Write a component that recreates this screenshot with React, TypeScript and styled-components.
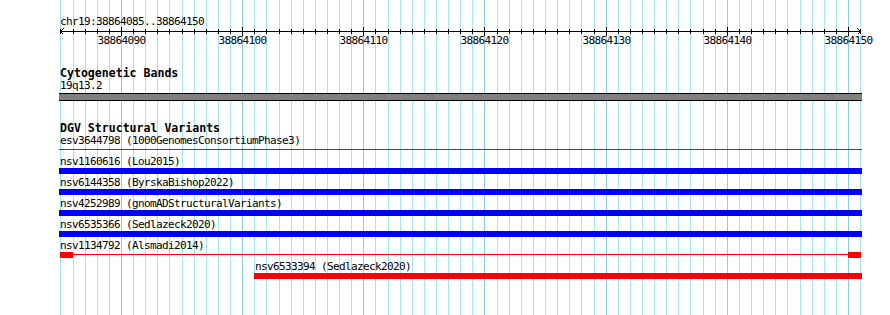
import React from "react";
import styled, { createGlobalStyle } from "styled-components";

// genomic window shown in the panel
const START = 38864085;
const END = 38864150;
const ORIGIN = 60.4;
const BP_WIDTH = 12.117;
const PANEL_LEFT = 59;
const PANEL_WIDTH = 803;

const bpX = (bp: number) => Math.round(ORIGIN + (bp - START) * BP_WIDTH);
const local = (x: number) => x - PANEL_LEFT;

const GlobalStyle = createGlobalStyle`
  html, body {
    margin: 0;
    padding: 0;
    background: #ffffff;
  }
  body {
    color: #000000;
    font-family: "DejaVu Sans Mono", "Liberation Mono", monospace;
  }
`;

const Canvas = styled.div`
  background: #ffffff;
  height: 315px;
  overflow: hidden;
  position: relative;
  width: 890px;
`;

const GridSvg = styled.svg`
  left: 0;
  position: absolute;
  top: 0;
`;

const Panel = styled.div`
  display: flex;
  flex-direction: column;
  margin-left: ${PANEL_LEFT}px;
  padding-top: 15px;
  position: relative;
  width: ${PANEL_WIDTH}px;
`;

const SmallText = styled.div`
  font-size: 11px;
  height: 13px;
  letter-spacing: -0.62px;
  line-height: 13px;
  padding-left: 1px;
  white-space: nowrap;
`;

const TrackTitle = styled.div`
  font-size: 11.6px;
  font-weight: bold;
  height: 10px;
  letter-spacing: -0.02px;
  line-height: 10px;
  margin-bottom: 1px;
  padding-left: 1px;
  white-space: nowrap;
`;

const RulerSvg = styled.svg`
  display: block;
  overflow: visible;
`;

const TickLabels = styled.div`
  height: 13px;
  position: relative;
`;

const TickLabel = styled.span`
  font-size: 11px;
  letter-spacing: -0.62px;
  line-height: 13px;
  position: absolute;
  top: 0;
  transform: translateX(-50%);
  white-space: nowrap;
`;

const Section = styled.section<{ $gap: number }>`
  display: flex;
  flex-direction: column;
  margin-top: ${({ $gap }) => $gap}px;
`;

const Band = styled.div`
  background: #808080;
  border-bottom: 1px solid #000000;
  border-top: 1px solid #000000;
  box-sizing: border-box;
  height: 8px;
  margin-top: 1px;
  width: ${PANEL_WIDTH}px;
`;

const VariantRow = styled.div`
  display: flex;
  flex-direction: column;
  height: 21px;
`;

const Glyph = styled.div<{ $inset?: boolean }>`
  align-items: center;
  display: flex;
  height: 6px;
  margin: 0 ${({ $inset }) => ($inset ? 1 : 0)}px;
`;

const Bar = styled.div<{ $color: string }>`
  background: ${({ $color }) => $color};
  flex: 1;
  height: 6px;
`;

const ThinLine = styled.div`
  align-self: flex-start;
  background: #ff0000;
  flex: 1;
  height: 1px;
  margin-top: 2px;
`;

const EndBox = styled.div`
  background: #ff0000;
  flex: 0 0 13px;
  height: 6px;
`;

type Variant = {
  id: string;
  source: string;
  start: number;
  kind: "line" | "bar" | "boxed";
  color: string;
};

const variants: Variant[] = [
  { id: "esv3644798", source: "1000GenomesConsortiumPhase3", start: START, kind: "line", color: "#ff0000" },
  { id: "nsv1160616", source: "Lou2015", start: START, kind: "bar", color: "#0000ff" },
  { id: "nsv6144358", source: "ByrskaBishop2022", start: START, kind: "bar", color: "#0000ff" },
  { id: "nsv4252989", source: "gnomADStructuralVariants", start: START, kind: "bar", color: "#0000ff" },
  { id: "nsv6535366", source: "Sedlazeck2020", start: START, kind: "bar", color: "#0000ff" },
  { id: "nsv1134792", source: "Alsmadi2014", start: START, kind: "boxed", color: "#ff0000" },
  { id: "nsv6533394", source: "Sedlazeck2020", start: 38864101, kind: "bar", color: "#ff0000" },
];

const gridLines = Array.from({ length: END - START + 2 }, (_, i) => ({
  x: bpX(START + i),
  major: (START + i) % 10 === 0,
}));

function Grid() {
  return (
    <GridSvg width={890} height={315} shapeRendering="crispEdges">
      {gridLines.map((g) => (
        <line
          key={g.x}
          x1={g.x + 0.5}
          x2={g.x + 0.5}
          y1={0}
          y2={315}
          stroke={g.major ? "#8ccae6" : "#a8e6ee"}
          strokeWidth={1}
        />
      ))}
    </GridSvg>
  );
}

function Ruler() {
  const left = local(gridLines[0].x);
  const right = local(gridLines[gridLines.length - 1].x);
  return (
    <>
      <RulerSvg width={PANEL_WIDTH} height={6} shapeRendering="crispEdges">
        <line x1={left} x2={right + 1} y1={3.5} y2={3.5} stroke="#000" />
        {gridLines.map((g) => (
          <line
            key={g.x}
            x1={local(g.x) + 0.5}
            x2={local(g.x) + 0.5}
            y1={g.major ? -1 : 1}
            y2={g.major ? 8 : 6}
            stroke="#000"
          />
        ))}
        <polyline
          points={`${left + 3.5},0.5 ${left + 0.5},3.5 ${left + 3.5},6.5`}
          fill="none"
          stroke="#000"
        />
        <polyline
          points={`${right - 2.5},0.5 ${right + 0.5},3.5 ${right - 2.5},6.5`}
          fill="none"
          stroke="#000"
        />
      </RulerSvg>
      <TickLabels>
        {gridLines
          .filter((g, i) => g.major && i > 0)
          .map((g, i) => (
            <TickLabel key={g.x} style={{ left: local(g.x) + 0.5 }}>
              {38864090 + i * 10}
            </TickLabel>
          ))}
      </TickLabels>
    </>
  );
}

function VariantGlyph({ v }: { v: Variant }) {
  if (v.kind === "line") {
    return (
      <Glyph>
        <ThinLine />
      </Glyph>
    );
  }
  if (v.kind === "boxed") {
    return (
      <Glyph $inset>
        <EndBox />
        <ThinLine />
        <EndBox />
      </Glyph>
    );
  }
  return (
    <Glyph>
      <Bar $color={v.color} />
    </Glyph>
  );
}

export default function App() {
  return (
    <>
      <GlobalStyle />
      <Canvas>
        <Grid />
        <Panel>
          <SmallText>
            chr19:{START}..{END}
          </SmallText>
          <Ruler />

          <Section $gap={21}>
            <TrackTitle>Cytogenetic Bands</TrackTitle>
            <SmallText>19q13.2</SmallText>
            <Band />
          </Section>

          <Section $gap={22}>
            <TrackTitle>DGV Structural Variants</TrackTitle>
            {variants.map((v) => {
              const offset = v.start === START ? 0 : local(bpX(v.start));
              return (
                <VariantRow key={v.id} style={{ marginLeft: offset }}>
                  <SmallText>
                    {v.id} ({v.source})
                  </SmallText>
                  <VariantGlyph v={v} />
                </VariantRow>
              );
            })}
          </Section>
        </Panel>
      </Canvas>
    </>
  );
}
